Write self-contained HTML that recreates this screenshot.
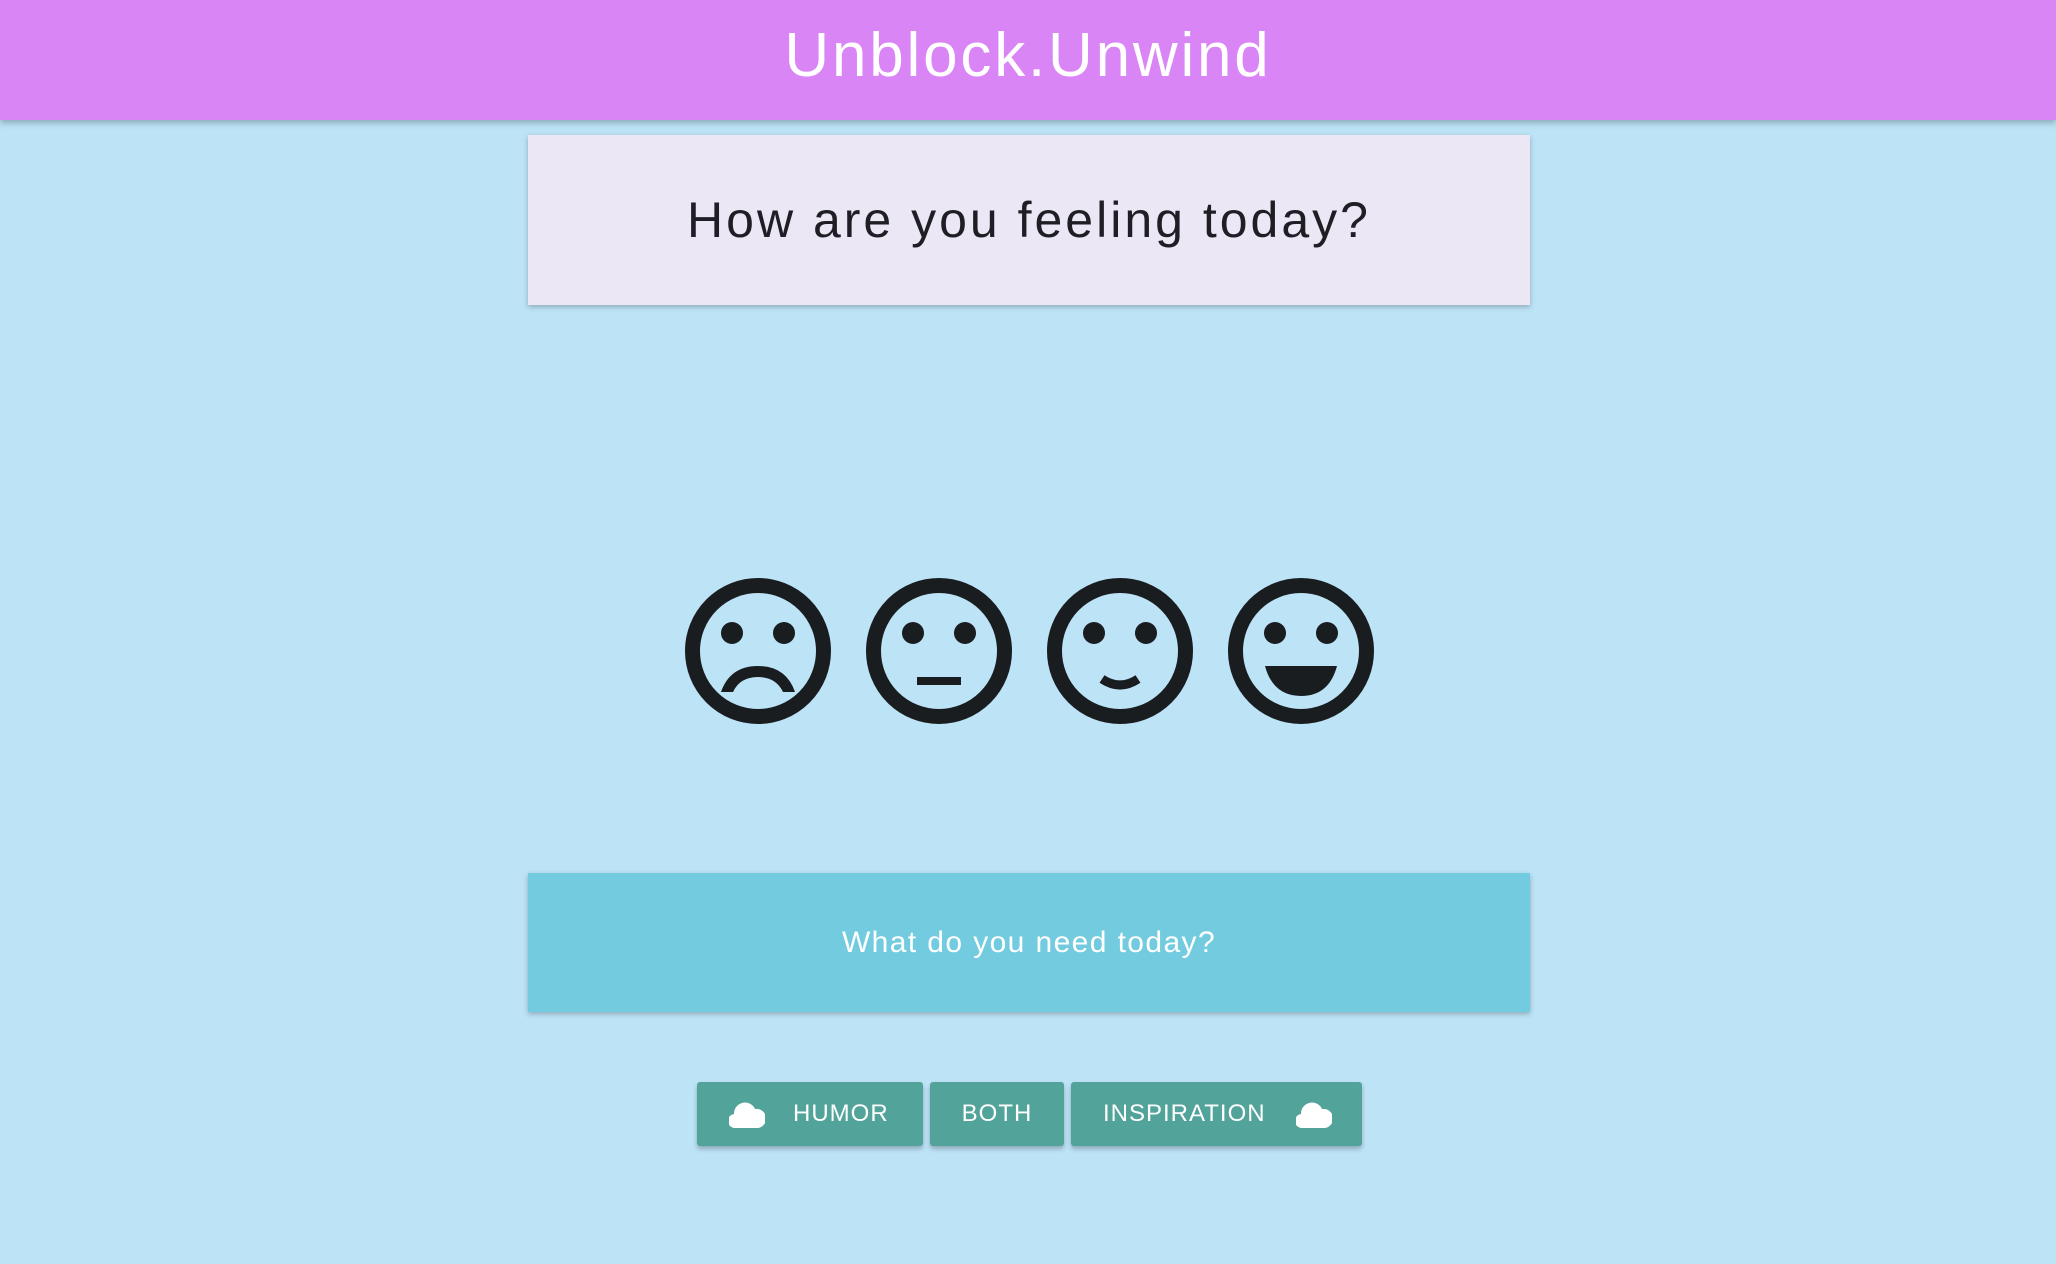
<!DOCTYPE html>
<html><head><meta charset="utf-8"><style>
*{margin:0;padding:0;box-sizing:border-box}
body{width:2056px;height:1264px;background:#bde3f7;font-family:"Liberation Sans",sans-serif;position:relative;overflow:hidden}
.hdr{position:absolute;left:0;top:0;width:2056px;height:120px;background:#da85f5;box-shadow:0 3px 6px rgba(0,0,0,.25);color:#fff;font-size:62px;letter-spacing:2.8px;text-align:center;line-height:112px}
.card{position:absolute;left:528px;top:135px;width:1002px;height:170px;background:#ebe7f5;box-shadow:0 2px 5px rgba(0,0,0,.25);text-align:center;line-height:170px;font-size:50px;letter-spacing:3px;color:#1e1e24}
.teal{position:absolute;left:528px;top:873px;width:1002px;height:139px;background:#73cbdf;box-shadow:0 2px 5px rgba(0,0,0,.25);text-align:center;line-height:139px;font-size:30px;letter-spacing:1.4px;color:#fff}
.btn{position:absolute;top:1082px;height:64px;background:#52a39a;border-radius:3px;box-shadow:0 3px 5px rgba(0,0,0,.25);color:#fff;font-size:24px;line-height:64px;letter-spacing:1px}
svg.f{position:absolute;top:578px}
</style></head><body>
<div class="hdr">Unblock.Unwind</div>
<div class="card">How are you feeling today?</div>

<svg class="f" style="left:685px" width="146" height="146" viewBox="-73 -73 146 146"><circle r="65.5" fill="none" stroke="#1a1d20" stroke-width="15"/><circle cx="-26" cy="-18" r="11" fill="#1a1d20"/><circle cx="26" cy="-18" r="11" fill="#1a1d20"/><path d="M-37 41 Q-28 15 0 15 Q28 15 37 41 L25 41 Q18 26 0 26 Q-18 26 -25 41Z" fill="#1a1d20"/></svg>
<svg class="f" style="left:866px" width="146" height="146" viewBox="-73 -73 146 146"><circle r="65.5" fill="none" stroke="#1a1d20" stroke-width="15"/><circle cx="-26" cy="-18" r="11" fill="#1a1d20"/><circle cx="26" cy="-18" r="11" fill="#1a1d20"/><rect x="-22" y="26" width="44" height="8" fill="#1a1d20"/></svg>
<svg class="f" style="left:1047px" width="146" height="146" viewBox="-73 -73 146 146"><circle r="65.5" fill="none" stroke="#1a1d20" stroke-width="15"/><circle cx="-26" cy="-18" r="11" fill="#1a1d20"/><circle cx="26" cy="-18" r="11" fill="#1a1d20"/><path d="M-18 28 Q0 40 18 28" fill="none" stroke="#1a1d20" stroke-width="9"/></svg>
<svg class="f" style="left:1228px" width="146" height="146" viewBox="-73 -73 146 146"><circle r="65.5" fill="none" stroke="#1a1d20" stroke-width="15"/><circle cx="-26" cy="-18" r="11" fill="#1a1d20"/><circle cx="26" cy="-18" r="11" fill="#1a1d20"/><path d="M-36 15 L36 15 Q28 45 0 45 Q-28 45 -36 15Z" fill="#1a1d20"/></svg>

<div class="teal">What do you need today?</div>

<div class="btn" style="left:697px;width:226px">
<svg style="position:absolute;left:32px;top:18px" width="36" height="28" viewBox="0 0 36 28"><path d="M7 28 A7 7 0 0 1 5 14 A11 11 0 0 1 26 9 A9 9 0 0 1 29 28Z" fill="#fff"/></svg>
<span style="position:absolute;left:96px">HUMOR</span></div>
<div class="btn" style="left:930px;width:134px;text-align:center">BOTH</div>
<div class="btn" style="left:1071px;width:291px">
<span style="position:absolute;left:32px">INSPIRATION</span>
<svg style="position:absolute;left:225px;top:18px" width="36" height="28" viewBox="0 0 36 28"><path d="M7 28 A7 7 0 0 1 5 14 A11 11 0 0 1 26 9 A9 9 0 0 1 29 28Z" fill="#fff"/></svg></div>
</body></html>
